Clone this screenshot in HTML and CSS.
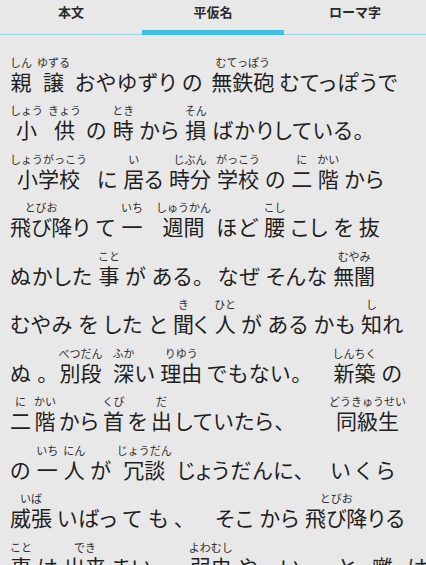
FILE: index.html
```html
<!DOCTYPE html>
<html lang="ja">
<head>
<meta charset="utf-8">
<title>平仮名</title>
<link rel="stylesheet" href="styles.css">
</head>
<body>
<nav class="tabs">
  <div class="tab">本文</div>
  <div class="tab active">平仮名</div>
  <div class="tab">ローマ字</div>
</nav>
<main class="text">
  <div class="row">
    <ruby class="s">親<rt>しん</rt></ruby>
    <ruby class="s">譲<rt>ゆずる</rt></ruby>
    <span class="k">おやゆずり</span>
    <span class="k">の</span>
    <ruby class="s g3">無鉄砲<rt>むてっぽう</rt></ruby>
    <span class="k">むてっぽうで</span>
  </div>
  <div class="row">
    <ruby class="s">小<rt>しょう</rt></ruby>
    <ruby class="s">供<rt>きょう</rt></ruby>
    <span class="k">の</span>
    <ruby class="s">時<rt>とき</rt></ruby>
    <span class="k">から</span>
    <ruby class="s">損<rt>そん</rt></ruby>
    <span class="k">ばかりしている。</span>
  </div>
  <div class="row">
    <ruby class="s">小学校<rt>しょうがっこう</rt></ruby>
    <span class="k g5">に</span>
    <span class="t"><ruby class="s">居<rt>い</rt></ruby><span class="k">る</span></span>
    <ruby class="s">時分<rt>じぶん</rt></ruby>
    <ruby class="s">学校<rt>がっこう</rt></ruby>
    <span class="k">の</span>
    <ruby class="s">二<rt>に</rt></ruby>
    <ruby class="s">階<rt>かい</rt></ruby>
    <span class="k">から</span>
  </div>
  <div class="row">
    <span class="t"><ruby class="s">飛び降<rt>とびお</rt></ruby><span class="k">り</span></span>
    <span class="k">て</span>
    <ruby class="s">一<rt>いち</rt></ruby>
    <ruby class="s g8">週間<rt>しゅうかん</rt></ruby>
    <span class="k">ほど</span>
    <ruby class="s">腰<rt>こし</rt></ruby>
    <span class="k">こし</span>
    <span class="k">を</span>
    <span class="k">抜</span>
  </div>
  <div class="row">
    <span class="k">ぬかした</span>
    <ruby class="s">事<rt>こと</rt></ruby>
    <span class="k">が</span>
    <span class="k">ある。</span>
    <span class="k g8">なぜ</span>
    <span class="k">そんな</span>
    <ruby class="s">無闇<rt>むやみ</rt></ruby>
  </div>
  <div class="row">
    <span class="k">むやみ</span>
    <span class="k">を</span>
    <span class="k">した</span>
    <span class="k">と</span>
    <span class="t"><ruby class="s">聞<rt>き</rt></ruby><span class="k">く</span></span>
    <ruby class="s">人<rt>ひと</rt></ruby>
    <span class="k">が</span>
    <span class="k">ある</span>
    <span class="k">かも</span>
    <span class="t"><ruby class="s">知<rt>し</rt></ruby><span class="k">れ</span></span>
  </div>
  <div class="row">
    <span class="k">ぬ</span>
    <span class="k">。</span>
    <ruby class="s g5">別段<rt>べつだん</rt></ruby>
    <span class="t g5"><ruby class="s">深<rt>ふか</rt></ruby><span class="k">い</span></span>
    <ruby class="s">理由<rt>りゆう</rt></ruby>
    <span class="k">でもない。</span>
    <ruby class="s g25">新築<rt>しんちく</rt></ruby>
    <span class="k">の</span>
  </div>
  <div class="row tight">
    <ruby class="s">二<rt>に</rt></ruby>
    <ruby class="s">階<rt>かい</rt></ruby>
    <span class="k">から</span>
    <ruby class="s">首<rt>くび</rt></ruby>
    <span class="k">を</span>
    <ruby class="s">出<rt>だ</rt></ruby>
    <span class="k">していたら、</span>
    <ruby class="s g40">同級生<rt>どうきゅうせい</rt></ruby>
  </div>
  <div class="row">
    <span class="k">の</span>
    <ruby class="s">一<rt>いち</rt></ruby>
    <ruby class="s">人<rt>にん</rt></ruby>
    <span class="k">が</span>
    <ruby class="s">冗談<rt>じょうだん</rt></ruby>
    <span class="k">じょうだんに、</span>
    <span class="k g20">い</span>
    <span class="k">く</span>
    <span class="k">ら</span>
  </div>
  <div class="row">
    <ruby class="s">威張<rt>いば</rt></ruby>
    <span class="k">いばっ</span>
    <span class="k">て</span>
    <span class="k">も</span>
    <span class="k">、</span>
    <span class="k g25">そこ</span>
    <span class="k">から</span>
    <span class="t"><ruby class="s">飛び降<rt>とびお</rt></ruby><span class="k">りる</span></span>
  </div>
  <div class="row">
    <ruby class="s">事<rt>こと</rt></ruby>
    <span class="k">は</span>
    <ruby class="s">出来<rt>でき</rt></ruby>
    <span class="k">まい。</span>
    <ruby class="s g20">弱虫<rt>よわむし</rt></ruby>
    <span class="k">やーい。</span>
    <span class="k g20">と</span>
    <span class="k g10">囃</span>
    <span class="k g8">は</span>
  </div>
</main>
</body>
</html>
```

FILE: styles.css
```css
html {
  background: #e8e8e8;
}

body {
  margin: 0;
  background: #e8e8e8;
  color: #1f1f1f;
  font-family: "Noto Sans CJK JP", "Noto Sans", sans-serif;
  overflow: hidden;
}

.tabs {
  display: grid;
  grid-template-columns: repeat(3, 1fr);
  height: 34px;
  border-bottom: 1px solid #9fd5e7;
}

.tab {
  padding-top: 3px;
  font-size: 13px;
  line-height: 18px;
  font-weight: 700;
  color: #2a2a2a;
  text-align: center;
}

.tab.active {
  box-shadow: inset 0 -4px 0 #3dbee2, 0 1px 0 #3dbee2;
}

.text {
  display: flex;
  flex-direction: column;
  row-gap: 11.5px;
  padding: 20.5px 10px 0;
}

.row {
  display: flex;
  align-items: flex-end;
  column-gap: 5px;
  white-space: nowrap;
}

.row.tight {
  column-gap: 3px;
}

.t {
  display: flex;
  align-items: flex-end;
}

.s {
  display: inline-flex;
  flex-direction: column-reverse;
  align-items: center;
  font-size: 21px;
  line-height: 24px;
  font-feature-settings: "palt";
}

.s rt {
  display: block;
  font-size: 11px;
  line-height: 13px;
  font-feature-settings: normal;
  color: #2e2e2e;
  text-align: center;
}

.k {
  font-size: 21px;
  line-height: 24px;
  letter-spacing: 1px;
  font-feature-settings: "palt";
}

.g3 { margin-left: 3px; }
.g5 { margin-left: 5px; }
.g8 { margin-left: 8px; }
.g10 { margin-left: 10px; }
.g20 { margin-left: 20px; }
.g25 { margin-left: 25px; }
.g40 { margin-left: 40px; }
```
